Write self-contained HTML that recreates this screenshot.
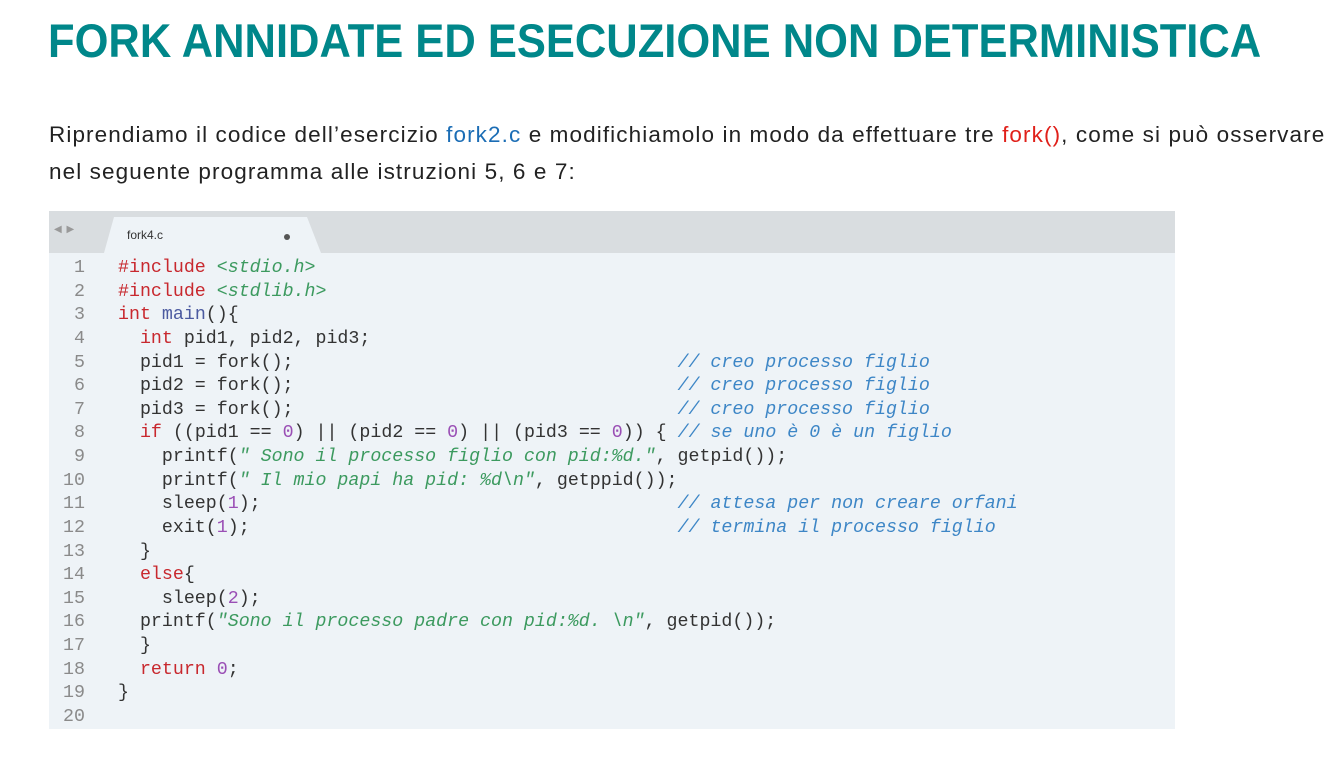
<!DOCTYPE html>
<html><head><meta charset="utf-8"><style>
body{margin:0;width:1339px;height:761px;background:#fff;font-family:"Liberation Sans",sans-serif;overflow:hidden;position:relative}
h1{position:absolute;left:48px;top:16px;margin:0;font-size:43.5px;font-weight:bold;color:#00878a;letter-spacing:0px;white-space:nowrap;transform:scaleY(1.08);transform-origin:left top}
.p{position:absolute;left:49px;top:116px;font-size:22.5px;letter-spacing:1.1px;line-height:37px;color:#222;white-space:nowrap}
.b{color:#1b6db5}.r{color:#e0201a}
.box{position:absolute;left:49px;top:211px;width:1126px;height:518px;background:#eef3f7}
.bar{position:absolute;left:0;top:0;width:1126px;height:42px;background:#d9dde0}
.tab{position:absolute;left:55px;top:6px;width:217px;height:36px;background:#eef3f7;clip-path:polygon(10px 0,203px 0,217px 36px,0 36px)}
.tab span{position:absolute;left:23px;top:11px;font-size:12px;color:#333}
.tab i{position:absolute;left:180px;top:17px;width:6px;height:6px;border-radius:50%;background:#555}
.arr{position:absolute;left:5px;top:13px;font-size:10px;color:#999;letter-spacing:1px}
pre{position:absolute;margin:0;top:46px;font-family:"Liberation Mono",monospace;font-size:18.3px;line-height:23.63px}
.ln{left:0;width:36px;text-align:right;color:#8a8a8a}
.code{left:69px;color:#333}
.k{color:#c8282e}.s{color:#3c9a5f;font-style:italic}.n{color:#9a4fb5}.c{color:#3d86c6;font-style:italic}.f{color:#4b5aa0}
</style></head><body>
<h1>FORK ANNIDATE ED ESECUZIONE NON DETERMINISTICA</h1>
<div class="p">Riprendiamo il codice dell’esercizio <span class="b">fork2.c</span> e modifichiamolo in modo da effettuare tre <span class="r">fork()</span>, come si può osservare<br>nel seguente programma alle istruzioni 5, 6 e 7:</div>
<div class="box">
<div class="bar"><span class="arr">◀ ▶</span><div class="tab"><span>fork4.c</span><i></i></div></div>
<pre class="ln">1
2
3
4
5
6
7
8
9
10
11
12
13
14
15
16
17
18
19
20</pre>
<pre class="code"><span class="k">#include</span> <span class="s">&lt;stdio.h&gt;</span>
<span class="k">#include</span> <span class="s">&lt;stdlib.h&gt;</span>
<span class="k">int</span> <span class="f">main</span>(){
  <span class="k">int</span> pid1, pid2, pid3;
  pid1 = fork();                                   <span class="c">// creo processo figlio</span>
  pid2 = fork();                                   <span class="c">// creo processo figlio</span>
  pid3 = fork();                                   <span class="c">// creo processo figlio</span>
  <span class="k">if</span> ((pid1 == <span class="n">0</span>) || (pid2 == <span class="n">0</span>) || (pid3 == <span class="n">0</span>)) { <span class="c">// se uno è 0 è un figlio</span>
    printf(<span class="s">" Sono il processo figlio con pid:%d."</span>, getpid());
    printf(<span class="s">" Il mio papi ha pid: %d\n"</span>, getppid());
    sleep(<span class="n">1</span>);                                      <span class="c">// attesa per non creare orfani</span>
    exit(<span class="n">1</span>);                                       <span class="c">// termina il processo figlio</span>
  }
  <span class="k">else</span>{
    sleep(<span class="n">2</span>);
  printf(<span class="s">"Sono il processo padre con pid:%d. \n"</span>, getpid());
  }
  <span class="k">return</span> <span class="n">0</span>;
}
</pre>
</div>
</body></html>
